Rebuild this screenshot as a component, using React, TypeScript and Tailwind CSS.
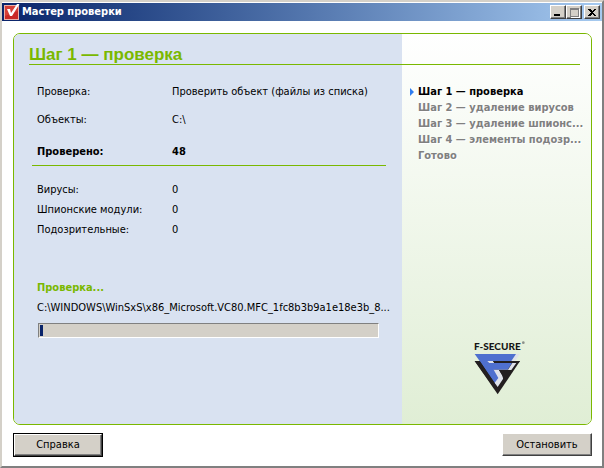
import React from "react";

const steps = [
  "Шаг 1 — проверка",
  "Шаг 2 — удаление вирусов",
  "Шаг 3 — удаление шпионс...",
  "Шаг 4 — элементы подозр...",
  "Готово",
];

const counters = [
  ["Вирусы:", "0"],
  ["Шпионские модули:", "0"],
  ["Подозрительные:", "0"],
];

const raised =
  "bg-[#d4d0c8] border border-t-white border-l-white border-r-[#404040] border-b-[#404040] shadow-[inset_-1px_-1px_0_#808080]";

function AppIcon() {
  return (
    <svg width="16" height="16" viewBox="0 0 16 16" aria-hidden="true">
      <rect x="0.5" y="1.5" width="14" height="14" fill="#c92a27" stroke="#e9b0a9" />
      <path d="M1 2h13v5L1 12z" fill="#e05045" opacity=".6" />
      <path d="M3 5h3l1 4L13 0h2.500L8 12H6z" fill="#fff" />
    </svg>
  );
}

function Logo() {
  return (
    <svg width="54" height="56" viewBox="102 63 162 168" role="img" aria-label="F-Secure">
      <text x="105" y="90" fontFamily="Lato, sans-serif" fontWeight="900" fontSize="30" fill="#161616">
        F-SECURE
      </text>
      <circle cx="253" cy="68" r="4" fill="#8b908a" />
      <path d="M230 102h12l-14 22h-14z" fill="#dfe2ea" />
      <path d="M107 123H243L176 223z" fill="#231f20" />
      <path d="M107 102H231L217 123H160l4 6H219L206 149H165L183 174 170 194 122 123z" fill="#4f70cf" />
      <path d="M107 123H122L176 202 170 211z" fill="#231f20" />
      <path d="M145 123h17l4 6H151z" fill="#dfe2ea" />
      <path d="M162 123H243L239 129H166z" fill="#231f20" />
      <path d="M220 129h12L217 150H180L194 174 176 201 167 188 178 174 164 149H207z" fill="#dfe2ea" />
      <path d="M180 150H218L194 184 190 166z" fill="#231f20" />
    </svg>
  );
}

export default function App() {
  return (
    <div className="flex min-h-screen flex-col border-2 border-t-[#d4d0c8] border-l-[#d4d0c8] border-r-[#808080] border-b-[#808080] bg-white font-['DejaVu_Sans_Condensed','DejaVu_Sans',sans-serif] text-[11px] leading-4 text-black">
      <header className="mt-px flex h-[18px] items-center bg-gradient-to-r from-[#0a246a] to-[#a6caf0] pr-0.5 pl-0.5">
        <AppIcon />
        <h1 className="ml-0.5 flex-1 font-bold text-white">Мастер проверки</h1>
        <button aria-label="Свернуть" className={`flex h-3.5 w-4 items-end justify-center pb-0.5 ${raised}`}>
          <span className="mr-0.5 h-0.5 w-1.5 bg-black" />
        </button>
        <button aria-label="Развернуть" disabled className={`flex h-3.5 w-4 items-center justify-center ${raised}`}>
          <span className="h-[9px] w-[9px] border border-t-2 border-[#808080] shadow-[1px_1px_0_#fff]" />
        </button>
        <button aria-label="Закрыть" className={`ml-0.5 flex h-3.5 w-4 items-center justify-center ${raised}`}>
          <svg width="8" height="7" viewBox="0 0 8 7" shapeRendering="crispEdges">
            <path d="M0 0h2l2 2 2-2h2L5 3.500 8 7H6L4 5 2 7H0l3-3.500z" fill="#000" />
          </svg>
        </button>
      </header>

      <div className="flex flex-1 flex-col pt-3 pr-2.5 pb-[9px] pl-[11px]">
        <main className="grid flex-1 grid-cols-[minmax(0,1fr)_189px] overflow-hidden rounded-[7px] border border-[#7ab800]">
          <section className="bg-[#d9e2f1]">
            <div className="ml-[15px] flex h-[31px] items-end border-b border-[#7ab800]">
              <h2 className="font-['Liberation_Sans',sans-serif] text-[17px] leading-[18px] font-bold text-[#7ab800]">
                Шаг 1 — проверка
              </h2>
            </div>
            <div className="pr-2 pl-[23px]">
              <dl className="grid grid-cols-[135px_1fr] pt-[19px]">
                <dt>Проверка:</dt>
                <dd>Проверить объект (файлы из списка)</dd>
                <dt className="mt-3">Объекты:</dt>
                <dd className="mt-3">C:\</dd>
                <dt className="mt-4 font-bold">Проверено:</dt>
                <dd className="mt-4 font-bold">48</dd>
              </dl>
              <hr className="mt-[5px] mr-2 -ml-[5px] border-[#7ab800]" />
              <dl className="mt-4 grid grid-cols-[135px_1fr] gap-y-1">
                {counters.map(([name, value]) => (
                  <React.Fragment key={name}>
                    <dt>{name}</dt>
                    <dd>{value}</dd>
                  </React.Fragment>
                ))}
              </dl>
              <p className="mt-[42px] font-bold text-[#7ab800]">Проверка...</p>
              <p className="mt-1 whitespace-nowrap">C:\WINDOWS\WinSxS\x86_Microsoft.VC80.MFC_1fc8b3b9a1e18e3b_8...</p>
              <div
                role="progressbar"
                aria-label="Проверка"
                aria-valuenow={1}
                className="mt-[7px] mr-[15px] ml-px h-[15px] border border-t-[#808080] border-r-white border-b-white border-l-[#808080] bg-[#d4d0c8] p-px"
              >
                <div className="h-full w-[3px] bg-[#0a246a]" />
              </div>
            </div>
          </section>

          <aside className="flex flex-col bg-gradient-to-b from-white to-[#e0eed5]">
            <div className="mr-[11px] h-[31px] border-b border-[#7ab800]" />
            <ol className="flex-1 pt-[19px] pl-4 font-bold whitespace-nowrap">
              {steps.map((step, i) =>
                i === 0 ? (
                  <li key={step} aria-current="step" className="-ml-2 flex items-center gap-1">
                    <svg width="4" height="8" viewBox="0 0 4 8" aria-hidden="true">
                      <path d="M0 0l4 4-4 4z" fill="#2f7df0" />
                    </svg>
                    {step}
                  </li>
                ) : (
                  <li key={step} className="text-[#808080] [text-shadow:1px_1px_0_#fff]">
                    {step}
                  </li>
                ),
              )}
            </ol>
            <div className="flex justify-center pb-[27px] pl-1.5">
              <Logo />
            </div>
          </aside>
        </main>

        <footer className="mt-2 flex items-start justify-between">
          <button className="h-6 w-[90px] border border-black bg-black">
            <span className={`flex h-full items-center justify-center ${raised}`}>Справка</span>
          </button>
          <button className={`h-[23px] w-[90px] ${raised}`}>Остановить</button>
        </footer>
      </div>
    </div>
  );
}
